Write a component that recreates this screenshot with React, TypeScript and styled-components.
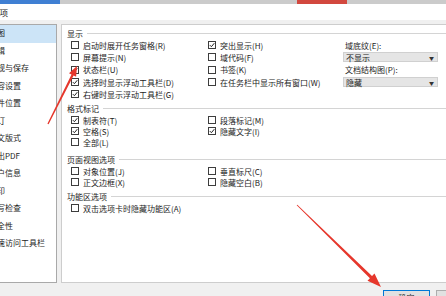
import React from 'react';
import styled, { createGlobalStyle } from 'styled-components';

const GlobalStyle = createGlobalStyle`
  * { box-sizing: border-box; }
  html, body { margin: 0; padding: 0; }
  body {
    background: #f0f0f0;
    color: #1c1c1c;
    font-family: "Noto Sans CJK SC", "Noto Sans", sans-serif;
  }
`;

type Cell =
  | { kind: 'check'; label: string; checked?: boolean }
  | { kind: 'label'; label: string }
  | { kind: 'combo'; value: string }
  | { kind: 'empty' };

type SectionType = {
  title: string;
  row: number;
  mt: number;
  cells: Cell[];
};

const sideItems = [
  '视图', '编辑', '常规与保存', '兼容设置', '文件位置', '修订', '中文版式',
  '输出PDF', '用户信息', '打印', '拼写检查', '安全性', '快速访问工具栏',
];

const ck = (label: string, checked = false): Cell => ({ kind: 'check', label, checked });
const empty: Cell = { kind: 'empty' };

const sections: SectionType[] = [
  {
    title: '显示',
    row: 12.3,
    mt: 0,
    cells: [
      ck('启动时展开任务窗格(R)'), ck('突出显示(H)', true), { kind: 'label', label: '域底纹(E):' },
      ck('屏幕提示(N)'), ck('域代码(F)'), { kind: 'combo', value: '不显示' },
      ck('状态栏(U)', true), ck('书签(K)'), { kind: 'label', label: '文档结构图(P):' },
      ck('选择时显示浮动工具栏(D)', true), ck('在任务栏中显示所有窗口(W)'), { kind: 'combo', value: '隐藏' },
      ck('右键时显示浮动工具栏(G)', true), empty, empty,
    ],
  },
  {
    title: '格式标记',
    row: 11,
    mt: 2.5,
    cells: [
      ck('制表符(T)', true), ck('段落标记(M)'), empty,
      ck('空格(S)', true), ck('隐藏文字(I)', true), empty,
      ck('全部(L)'), empty, empty,
    ],
  },
  {
    title: '页面视图选项',
    row: 11,
    mt: 6,
    cells: [
      ck('对象位置(J)'), ck('垂直标尺(C)'), empty,
      ck('正文边框(X)'), ck('隐藏空白(B)'), empty,
    ],
  },
  {
    title: '功能区选项',
    row: 11,
    mt: 3,
    cells: [ck('双击选项卡时隐藏功能区(A)')],
  },
];

const arrowPoints = (
  x1: number, y1: number, x2: number, y2: number,
  w0: number, w1: number, headLen: number, headW: number,
) => {
  const dx = x2 - x1;
  const dy = y2 - y1;
  const len = Math.hypot(dx, dy);
  const ux = dx / len;
  const uy = dy / len;
  const nx = -uy;
  const ny = ux;
  const bx = x2 - ux * headLen;
  const by = y2 - uy * headLen;
  const pts = [
    [x1 + (nx * w0) / 2, y1 + (ny * w0) / 2],
    [bx + (nx * w1) / 2, by + (ny * w1) / 2],
    [bx + (nx * headW) / 2, by + (ny * headW) / 2],
    [x2, y2],
    [bx - (nx * headW) / 2, by - (ny * headW) / 2],
    [bx - (nx * w1) / 2, by - (ny * w1) / 2],
    [x1 - (nx * w0) / 2, y1 - (ny * w0) / 2],
  ];
  return pts.map((p) => p.map((v) => v.toFixed(1)).join(',')).join(' ');
};

const CheckMark = () => (
  <svg width="6" height="6" viewBox="0 0 6 6">
    <path d="M0.8 3.1 L2.4 4.7 L5.3 1.2" fill="none" stroke="#222" strokeWidth="1" />
  </svg>
);

const renderCell = (cell: Cell, i: number) => {
  switch (cell.kind) {
    case 'check':
      return (
        <CheckRow key={i}>
          <Box>{cell.checked && <CheckMark />}</Box>
          <span>{cell.label}</span>
        </CheckRow>
      );
    case 'label':
      return <FieldLabel key={i}>{cell.label}</FieldLabel>;
    case 'combo':
      return (
        <Combo key={i}>
          <span>{cell.value}</span>
          <Caret>▼</Caret>
        </Combo>
      );
    default:
      return <span key={i} />;
  }
};

export default function App() {
  return (
    <>
      <GlobalStyle />
      <Dialog>
        <TopStrip>
          <StripMark $w={60} $ml={0} $c="#3f7fd3" />
          <StripMark $w={50} $ml={237} $c="#d2483e" />
        </TopStrip>
        <TitleBar>
          <TitleText>选项</TitleText>
        </TitleBar>
        <Body>
          <Sidebar>
            {sideItems.map((item, i) => (
              <SideItem key={item} $active={i === 0}>{item}</SideItem>
            ))}
          </Sidebar>
          <Main>
            {sections.map((s) => (
              <Section key={s.title} $mt={s.mt}>
                <SectionHead>{s.title}</SectionHead>
                <OptionGrid $row={s.row}>{s.cells.map(renderCell)}</OptionGrid>
              </Section>
            ))}
          </Main>
        </Body>
        <Footer>
          <Button $primary>确定</Button>
          <Button>取消</Button>
        </Footer>
        <Overlay viewBox="0 0 446 296">
          <polygon points={arrowPoints(48, 124, 77, 66, 1.4, 2.4, 10, 8)} fill="#e6372c" />
          <polygon points={arrowPoints(297, 205, 381, 287, 0.8, 3, 14, 10)} fill="#e6372c" />
        </Overlay>
      </Dialog>
    </>
  );
}

const Dialog = styled.div`
  position: relative;
  width: 446px;
  height: 296px;
  overflow: hidden;
  display: flex;
  flex-direction: column;
`;

const TopStrip = styled.div`
  display: flex;
  height: 4px;
  flex: none;
  background: #cbcbcb;
`;

const StripMark = styled.div<{ $w: number; $ml: number; $c: string }>`
  width: ${(p) => p.$w}px;
  margin-left: ${(p) => p.$ml}px;
  background: ${(p) => p.$c};
`;

const TitleBar = styled.div`
  display: flex;
  align-items: center;
  height: 16px;
  flex: none;
  background: #fff;
  font-size: 8.5px;
`;

const TitleText = styled.span`
  margin-left: -9px;
`;

const Body = styled.div`
  display: flex;
  gap: 4px;
  height: 263px;
  flex: none;
  padding-top: 4px;
`;

const Sidebar = styled.div`
  flex: none;
  width: 71px;
  margin-left: -14px;
  background: #fff;
  border: 1px solid #a9a9a9;
`;

const SideItem = styled.div<{ $active?: boolean }>`
  height: 17.5px;
  line-height: 16px;
  padding-left: 2px;
  font-size: 8px;
  white-space: nowrap;
  background: ${(p) => (p.$active ? '#cce4f7' : 'transparent')};
`;

const Main = styled.div`
  flex: none;
  width: 420px;
  background: #fff;
  border: 1px solid #cdcdcd;
  padding: 2px 0 0 5px;
`;

const Section = styled.div<{ $mt: number }>`
  margin-top: ${(p) => p.$mt}px;
`;

const SectionHead = styled.div`
  display: flex;
  align-items: center;
  gap: 4px;
  height: 12px;
  font-size: 8px;
  white-space: nowrap;

  &::after {
    content: "";
    flex: 1;
    height: 1px;
    background: #d4d4d4;
  }
`;

const OptionGrid = styled.div<{ $row: number }>`
  display: grid;
  grid-template-columns: 137px 135px 95px;
  grid-auto-rows: ${(p) => p.$row}px;
  align-items: center;
  padding-left: 4px;
`;

const CheckRow = styled.div`
  display: flex;
  align-items: center;
  gap: 4px;
  font-size: 8px;
  white-space: nowrap;
`;

const Box = styled.span`
  display: grid;
  place-items: center;
  flex: none;
  width: 8px;
  height: 8px;
  border: 1px solid #3d3d3d;
  background: #fff;
`;

const FieldLabel = styled.div`
  padding-left: 2px;
  font-size: 8px;
  white-space: nowrap;
`;

const Combo = styled.div`
  display: flex;
  align-items: center;
  justify-content: space-between;
  height: 10px;
  padding: 0 3px 0 2px;
  background: #e5e5e5;
  border: 1px solid #d0d0d0;
  font-size: 8px;
`;

const Caret = styled.span`
  font-size: 5px;
  color: #333;
`;

const Footer = styled.div`
  display: flex;
  justify-content: flex-end;
  gap: 6px;
  flex: none;
  height: 13px;
  padding-top: 7px;
  margin-right: -37px;
`;

const Button = styled.div<{ $primary?: boolean }>`
  flex: none;
  display: flex;
  justify-content: center;
  width: 47px;
  height: 18px;
  padding-top: 1px;
  border: 1px solid ${(p) => (p.$primary ? '#0078d7' : '#adadad')};
  background: #e1e1e1;
  font-size: 8px;
`;

const Overlay = styled.svg`
  position: absolute;
  left: 0;
  top: 0;
  width: 446px;
  height: 296px;
  pointer-events: none;
`;
